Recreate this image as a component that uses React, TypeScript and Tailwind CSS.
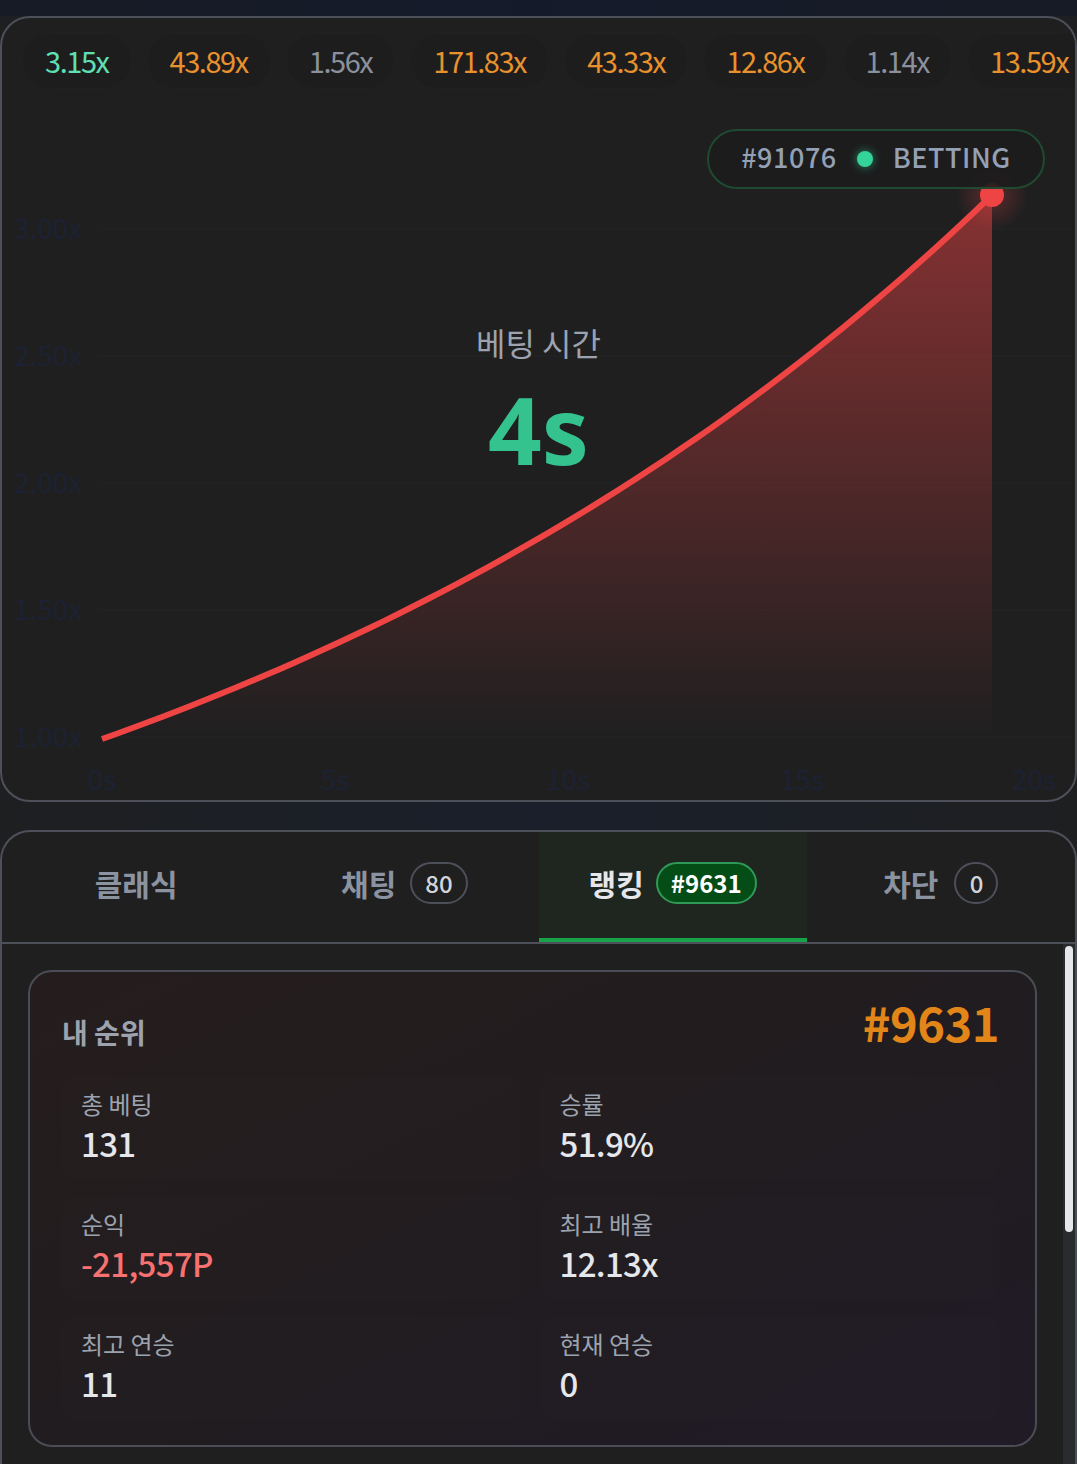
import React from "react";

const font = { fontFamily: '"Noto Sans CJK KR", "Noto Sans", sans-serif' };
const latin = { fontFamily: '"Noto Sans", "Noto Sans CJK KR", sans-serif' };

const history = [
  { v: "3.15x", c: "text-[#5fe0b4]" },
  { v: "43.89x", c: "text-[#e8912d]" },
  { v: "1.56x", c: "text-[#8b919c]" },
  { v: "171.83x", c: "text-[#e8912d]" },
  { v: "43.33x", c: "text-[#e8912d]" },
  { v: "12.86x", c: "text-[#e8912d]" },
  { v: "1.14x", c: "text-[#8b919c]" },
  { v: "13.59x", c: "text-[#e8912d]" },
];

// curve from (100,721) to (990,177), exponential
const buildCurve = () => {
  const pts: string[] = [];
  for (let i = 0; i <= 60; i++) {
    const t = i / 60;
    const x = 100 + 890 * t;
    const y = 721 - 544 * ((Math.exp(t) - 1) / (Math.E - 1));
    pts.push(`${x.toFixed(1)},${y.toFixed(1)}`);
  }
  return pts;
};

const Chart = () => {
  const pts = buildCurve();
  const line = "M" + pts.join(" L");
  const area = line + " L990,721 L100,721 Z";
  const yLabels = [
    { l: "3.00x", y: 211 },
    { l: "2.50x", y: 338 },
    { l: "2.00x", y: 465 },
    { l: "1.50x", y: 592 },
    { l: "1.00x", y: 719 },
  ];
  const xLabels = [
    { l: "0s", x: 100 },
    { l: "5s", x: 333 },
    { l: "10s", x: 566 },
    { l: "15s", x: 800 },
    { l: "20s", x: 1032 },
  ];
  return (
    <svg className="absolute inset-0" width="1077" height="786" viewBox="0 0 1077 786">
      <defs>
        <linearGradient id="fillG" x1="0" y1="177" x2="0" y2="721" gradientUnits="userSpaceOnUse">
          <stop offset="0" stopColor="#ef4444" stopOpacity="0.5" />
          <stop offset="1" stopColor="#ef4444" stopOpacity="0" />
        </linearGradient>
        <radialGradient id="glow" cx="0.5" cy="0.5" r="0.5">
          <stop offset="0" stopColor="#ef4444" stopOpacity="0.3" />
          <stop offset="1" stopColor="#ef4444" stopOpacity="0" />
        </radialGradient>
      </defs>
      {yLabels.map((g) => (
        <g key={g.l}>
          <line x1="97" x2="1070" y1={g.y} y2={g.y} stroke="#222324" strokeWidth="1.5" />
          <text x="12" y={g.y + 10} fill="#1c2233" fontSize="28" style={font}>
            {g.l}
          </text>
        </g>
      ))}
      {xLabels.map((g) => (
        <text key={g.l} x={g.x} y={772} textAnchor="middle" fill="#1c2233" fontSize="28" style={font}>
          {g.l}
        </text>
      ))}
      <path d={area} fill="url(#fillG)" />
      <circle cx="990" cy="177" r="36" fill="url(#glow)" />
      <path d={line} fill="none" stroke="#ef4444" strokeWidth="6" strokeLinecap="butt" strokeLinejoin="round" />
      <circle cx="990" cy="177" r="12" fill="#ef4444" />
    </svg>
  );
};

const Stat = ({ label, value, color }: { label: string; value: string; color?: string }) => (
  <div className="h-[104px] rounded-[14px] bg-white/[0.006] px-[19px] pt-[12px]">
    <div className="text-[24px] leading-[32px] text-[#9ca3af]">{label}</div>
    <div className={`text-[33px] leading-[46px] font-medium tracking-[-0.02em] ${color ?? "text-[#e5e7eb]"}`}>{value}</div>
  </div>
);

export default function App() {
  return (
    <div className="w-[1077px] h-[1464px] overflow-hidden bg-[#1e1f21] flex flex-col" style={font}>
      <div className="h-[16px] bg-gradient-to-r from-[#171b25] via-[#141a2a] to-[#171b25]" />
      {/* chart panel */}
      <div className="relative h-[786px] rounded-[30px] border-2 border-[#4d5059] bg-[#1f1f20] overflow-hidden">
        <Chart />
        <div className="relative flex gap-[15px] pl-[20px] pt-[15px] whitespace-nowrap">
          {history.map((h, i) => (
            <div
              key={i}
              className={`h-[56px] flex items-center px-[22px] rounded-full bg-[#1d1d1e] border border-[#212122] text-[29px] tracking-[-0.05em] ${h.c}`}
            >
              {h.v}
            </div>
          ))}
        </div>
        <div className="absolute left-[705px] top-[111px] w-[338px] h-[60px] rounded-full border-2 border-[#1f4a31] bg-[#1c1c1d]/90 flex items-center justify-center gap-[20px] text-[27px] font-medium text-[#94a0b4] tracking-[0.02em]">
          <span className="-mt-[4px]">#91076</span>
          <span className="w-[16px] h-[16px] rounded-full bg-[#34d399] shadow-[0_0_10px_rgba(52,211,153,0.6)]" />
          <span className="-mt-[4px]">BETTING</span>
        </div>
        <div className="absolute left-0 right-0 top-[301px] flex flex-col items-center">
          <div className="text-[32px] leading-[46px] text-[#9ca3af]">베팅 시간</div>
          <div className="text-[94px] leading-[100px] font-bold text-[#34c38f] mt-[14px]" style={latin}>
            4s
          </div>
        </div>
      </div>
      <div className="h-[28px] bg-gradient-to-r from-[#1e1f21] via-[#1a1f2b] to-[#1e1f21]" />
      {/* tabs panel */}
      <div className="flex-1 flex flex-col rounded-t-[30px] border-2 border-b-0 border-[#4d5059] bg-[#1f1f20] overflow-hidden">
        <div className="grid grid-cols-4 h-[112px] border-b-2 border-[#4d5059]">
          <div className="flex items-center justify-center pb-[8px] text-[30px] font-bold text-[#8b93a1]">클래식</div>
          <div className="flex items-center justify-center pb-[8px] gap-[14px] text-[30px] font-bold text-[#8b93a1]">
            <span>채팅</span>
            <span className="h-[42px] px-[13px] rounded-full border-2 border-[#4d5059] flex items-center text-[24px] font-medium text-[#d1d5db]">80</span>
          </div>
          <div className="relative flex items-center justify-center pb-[8px] gap-[12px] bg-[#1f2620] text-[30px] font-bold text-[#e5e7eb]">
            <span>랭킹</span>
            <span className="h-[42px] px-[13px] rounded-full border-2 border-[#2f9a57] bg-[#044d17] flex items-center text-[24px] font-semibold text-white">#9631</span>
            <div className="absolute left-0 right-0 bottom-0 h-[4px] bg-[#16a34a]" />
          </div>
          <div className="flex items-center justify-center pb-[8px] gap-[16px] text-[30px] font-bold text-[#8b93a1]">
            <span>차단</span>
            <span className="h-[42px] w-[44px] rounded-full border-2 border-[#4d5059] flex items-center justify-center text-[24px] font-medium text-[#d1d5db]">0</span>
          </div>
        </div>
        <div className="flex-1 flex">
          <div className="flex-1 px-[26px] pt-[26px]">
            <div className="rounded-[24px] border-2 border-[#4a4d55] bg-gradient-to-br from-[#251d1d] via-[#211c1f] to-[#201b26] pl-[32px] pr-[36px] pt-[24px] pb-[25px]">
              <div className="flex items-center justify-between h-[60px]">
                <div className="text-[28px] font-bold text-[#9ca3af] mt-[12px]">내 순위</div>
                <div className="text-[47px] leading-[60px] font-bold text-[#e3861a] tracking-[-0.01em] -mt-[8px]">#9631</div>
              </div>
              <div className="grid grid-cols-2 gap-x-[20px] gap-y-[16px] mt-[20px]">
                <Stat label="총 베팅" value="131" />
                <Stat label="승률" value="51.9%" />
                <Stat label="순익" value="-21,557P" color="text-[#f87171]" />
                <Stat label="최고 배율" value="12.13x" />
                <Stat label="최고 연승" value="11" />
                <Stat label="현재 연승" value="0" />
              </div>
            </div>
          </div>
          <div className="w-[12px] bg-[#2a2b2e] flex flex-col pt-[2px]">
            <div className="h-[286px] mx-[2px] rounded-full bg-[#e5e7eb]" />
          </div>
        </div>
      </div>
    </div>
  );
}
